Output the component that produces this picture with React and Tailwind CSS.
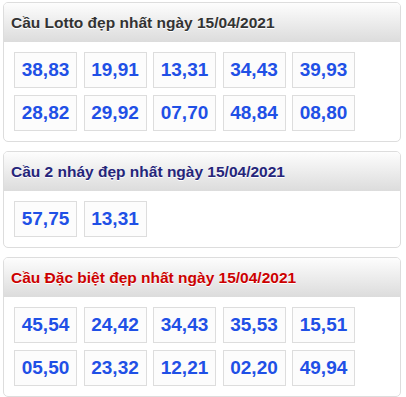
import React from "react";

const panels = [
  {
    title: "Cầu Lotto đẹp nhất ngày 15/04/2021",
    color: "text-[#333333]",
    nums: ["38,83", "19,91", "13,31", "34,43", "39,93", "28,82", "29,92", "07,70", "48,84", "08,80"],
  },
  {
    title: "Cầu 2 nháy đẹp nhất ngày 15/04/2021",
    color: "text-[#25257a]",
    nums: ["57,75", "13,31"],
  },
  {
    title: "Cầu Đặc biệt đẹp nhất ngày 15/04/2021",
    color: "text-[#cc0000]",
    nums: ["45,54", "24,42", "34,43", "35,53", "15,51", "05,50", "23,32", "12,21", "02,20", "49,94"],
  },
];

export default function App() {
  return (
    <div className="w-[406px] h-[397px] bg-white pt-[2px] pl-[3px] pr-[5px] flex flex-col gap-[9px] font-['Liberation_Sans',Arial,sans-serif]">
      {panels.map((p) => (
        <div key={p.title} className="border border-[#dddddd] rounded-[5px] overflow-hidden bg-white">
          <div className={`h-[39px] flex items-center pl-[7px] pt-[1px] bg-gradient-to-b from-[#fdfdfd] to-[#dcdcdc] text-[15.5px] font-bold [text-shadow:0_1px_0_#fff] ${p.color}`}>
            {p.title}
          </div>
          <div className="pt-[10px] pb-[10px] pl-[10px] grid grid-cols-[repeat(5,63px)] gap-x-[6.5px] gap-y-[7px]">
            {p.nums.map((n, i) => (
              <div
                key={i}
                className="h-[36px] border border-[#dddddd] bg-[#fcfcfc] flex items-center justify-center text-[19px] font-bold text-[#1f50e6]"
              >
                {n}
              </div>
            ))}
          </div>
        </div>
      ))}
    </div>
  );
}
